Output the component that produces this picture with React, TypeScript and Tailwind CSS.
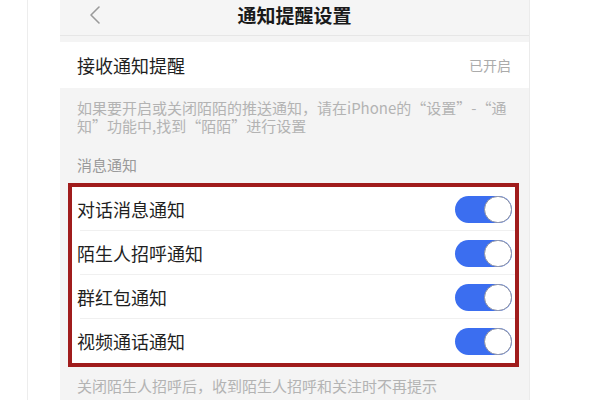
import React from "react";

const cjk = { fontFamily: '"Noto Sans CJK SC", "Noto Sans", sans-serif' };

function Toggle() {
  return (
    <div className="relative h-[27px] w-[57px] rounded-full bg-[#3b6ef0]">
      <div className="absolute right-0 top-0 h-[27px] w-[28px] rounded-full border border-[#8c90a0] bg-white" />
    </div>
  );
}

const rows = ["对话消息通知", "陌生人招呼通知", "群红包通知", "视频通话通知"];

export default function App() {
  return (
    <div className="flex h-[400px] w-[600px] overflow-hidden bg-white" style={cjk}>
      <div className="w-[27px]" />
      <div className="w-[33px] border-l border-[#ededed]" />
      <div className="flex w-[470px] flex-col border-r border-[#ebebeb] bg-[#f4f4f4]">
        {/* navigation bar */}
        <div className="grid h-[36px] grid-cols-[1fr_auto_1fr] items-center border-b border-[#e6e6e6] bg-[#f5f5f5] pb-[6px]">
          <div className="pl-[28px]">
            <svg width="14" height="20" viewBox="0 0 14 20" fill="none">
              <path d="M11 2 L3 10 L11 18" stroke="#9a9a9a" strokeWidth="1.6" strokeLinecap="round" strokeLinejoin="round" />
            </svg>
          </div>
          <div className="text-[19px] font-bold leading-none text-[#1a1a1a]">通知提醒设置</div>
          <div />
        </div>
        <div className="h-[6px]" />

        {/* receive notifications */}
        <div className="flex h-[46px] items-center justify-between bg-white pl-[17px] pr-[18px]">
          <span className="text-[18px] text-[#1f1f1f]">接收通知提醒</span>
          <span className="text-[14px] text-[#ababab]">已开启</span>
        </div>

        <div className="flex flex-col pl-[17px] pt-[11px] text-[15px] leading-[18px] text-[#b3b3b3]">
          <span className="whitespace-nowrap">如果要开启或关闭陌陌的推送通知，请在iPhone的“设置”-“通</span>
          <span className="whitespace-nowrap">知”功能中,找到“陌陌”进行设置</span>
        </div>
        <div className="mt-[21px] pl-[17px] text-[15px] leading-[18px] text-[#9a9a9a]">消息通知</div>

        {/* message notification switches */}
        <div className="ml-[8px] mr-[10px] mt-[9px] border-[4px] border-[#a01c1c] bg-white">
          {rows.map((label, i) => (
            <div key={label} className="relative flex h-[44px] items-center justify-between pl-[5px] pr-[3px]">
              <span className="text-[18px] text-[#1f1f1f]">{label}</span>
              <Toggle />
              {i < rows.length - 1 && (
                <div className="absolute bottom-0 left-[8px] right-0 h-px bg-[#f0f0f0]" />
              )}
            </div>
          ))}
        </div>

        <div className="mt-[10px] pl-[17px] text-[15px] leading-[18px] text-[#b3b3b3]">
          关闭陌生人招呼后，收到陌生人招呼和关注时不再提示
        </div>
      </div>
    </div>
  );
}
